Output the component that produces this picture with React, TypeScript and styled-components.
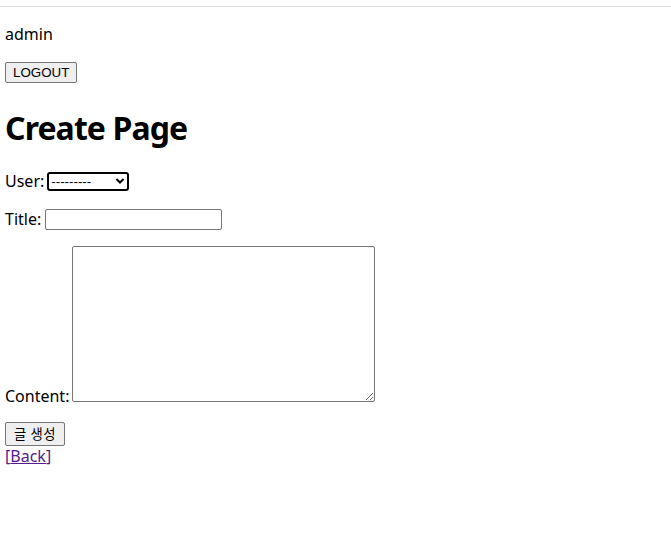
import React from "react";
import styled, { createGlobalStyle } from "styled-components";

const Global = createGlobalStyle`
  html, body { margin: 0; padding: 0; background: #fff; }
  body {
    font-family: "Noto Sans", "Noto Sans CJK KR", sans-serif;
    font-size: 16px;
    line-height: 21px;
    color: #000;
  }
`;

const TopRule = styled.div`
  height: 1px;
  margin-top: 6px;
  background: #dcdcdc;
`;

const Main = styled.main`
  padding: 0 5px;
  display: flex;
  flex-direction: column;
  align-items: flex-start;
`;

const UserName = styled.p`
  margin: 17px 0 0;
  height: 21px;
`;

const NativeButton = styled.button<{ $mt: number }>`
  margin-top: ${(p) => p.$mt}px;
  font-family: "Liberation Sans", "Noto Sans CJK KR", sans-serif;
  font-size: 13.33px;
  line-height: 15px;
  padding: 2px 7px;
  border: 1px solid #767676;
  border-radius: 2px;
  background: #efefef;
  color: #000;
`;

const KoreanButton = styled(NativeButton)`
  font-family: "Noto Sans CJK KR", sans-serif;
  line-height: 18px;
  padding: 2px 8px;
  letter-spacing: 0.6px;
`;

const Heading = styled.h1`
  margin: 23px 0 0;
  font-size: 32px;
  line-height: 43px;
  font-weight: 700;
  letter-spacing: -0.9px;
`;

const Row = styled.div<{ $mt: number; $align?: string; $gap: number }>`
  display: flex;
  align-items: ${(p) => p.$align || "center"};
  gap: ${(p) => p.$gap}px;
  margin-top: ${(p) => p.$mt}px;
`;

const Label = styled.label<{ $lh?: number }>`
  line-height: ${(p) => p.$lh || 21}px;
`;

const SelectWrap = styled.div`
  position: relative;
  display: flex;
`;

const Select = styled.select`
  appearance: none;
  width: 82px;
  height: 19px;
  box-sizing: border-box;
  border: 2px solid #000;
  border-radius: 3px;
  padding: 0 0 0 2px;
  font-family: "Liberation Sans", sans-serif;
  font-size: 13.33px;
  background: #fff;
  color: #000;
  outline: none;
`;

const Chevron = styled.svg`
  position: absolute;
  right: 4px;
  top: 5px;
  pointer-events: none;
`;

const TextInput = styled.input`
  width: 177px;
  height: 21px;
  box-sizing: border-box;
  border: 1px solid #767676;
  border-radius: 2px;
  padding: 1px 2px;
  font-size: 13.33px;
`;

const TextArea = styled.textarea`
  width: 303px;
  height: 156px;
  box-sizing: border-box;
  border: 1px solid #767676;
  border-radius: 2px;
  padding: 2px;
  margin: 0;
  display: block;
  font-size: 13.33px;
`;

const BackLine = styled.div`
  margin-top: 0;
  color: #551a8b;
`;

const BackLink = styled.a`
  color: #551a8b;
  text-decoration: underline;
`;

export default function App() {
  return (
    <>
      <Global />
      <TopRule />
      <Main>
        <UserName>admin</UserName>
        <NativeButton $mt={17}>LOGOUT</NativeButton>
        <Heading>Create Page</Heading>
        <Row $mt={22} $gap={3}>
          <Label>User:</Label>
          <SelectWrap>
            <Select defaultValue="">
              <option value="">---------</option>
            </Select>
            <Chevron width="10" height="8" viewBox="0 0 10 8">
              <path d="M1.5 2 L5 5.5 L8.5 2" fill="none" stroke="#000" strokeWidth="2" />
            </Chevron>
          </SelectWrap>
        </Row>
        <Row $mt={17} $gap={4}>
          <Label>Title:</Label>
          <TextInput type="text" />
        </Row>
        <Row $mt={16} $gap={3} $align="flex-end">
          <Label $lh={12}>Content:</Label>
          <TextArea />
        </Row>
        <KoreanButton $mt={20}>글 생성</KoreanButton>
        <BackLine>
          [<BackLink href="#">Back</BackLink>]
        </BackLine>
      </Main>
    </>
  );
}
